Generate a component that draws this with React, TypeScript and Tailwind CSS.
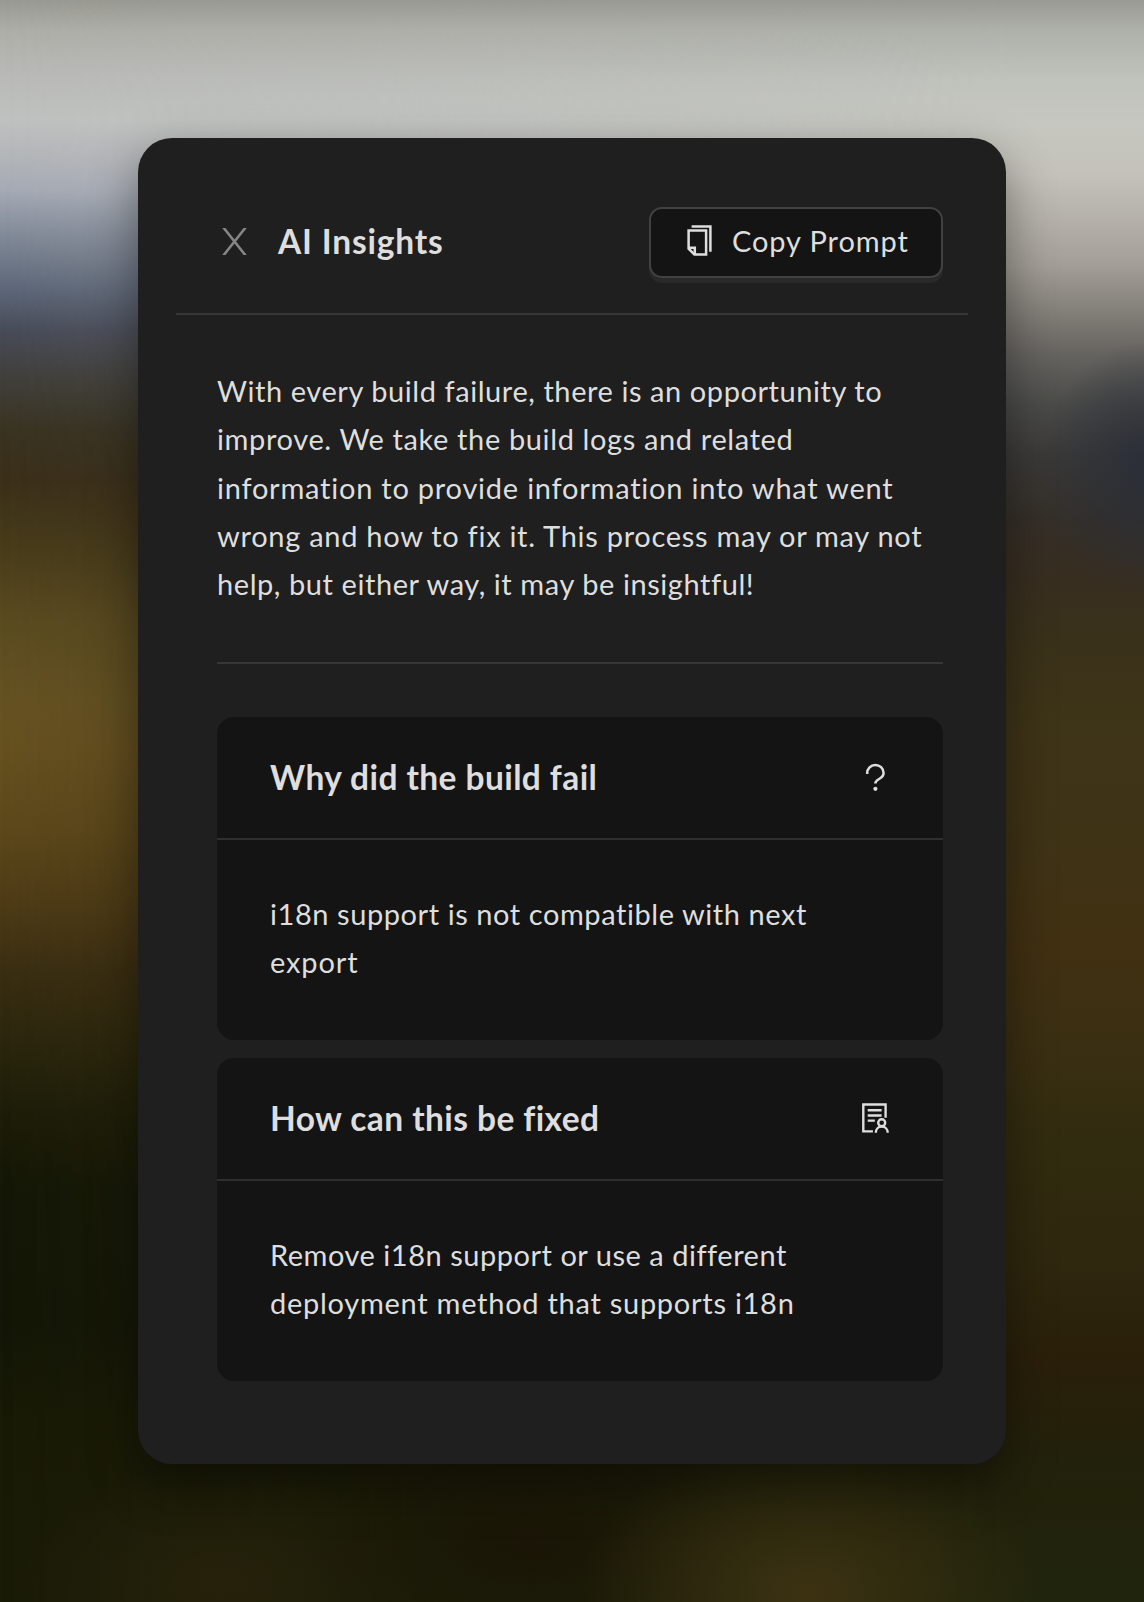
import type { ReactNode } from "react";

const leftBackdrop =
  "bg-[linear-gradient(to_bottom,#999993_0px,#aeaea8_30px,#b9bab7_75px,#bfc1c0_120px,#b3b6b9_155px,#a5aab5_190px,#818a98_235px,#5c6678_290px,#484c59_330px,#42413f_370px,#393321_430px,#3b2f19_480px,#4a3d1a_555px,#5a4b20_620px,#655222_700px,#665020_750px,#5c481a_830px,#4c3a16_910px,#3a2e12_970px,#29250d_1050px,#1c1c08_1120px,#141706_1190px,#131606_1320px,#181a06_1420px,#1a1b07_1602px)]";
const rightBackdrop =
  "bg-[radial-gradient(ellipse_110px_130px_at_1150px_470px,#2a2e38_0%,transparent_100%),linear-gradient(to_bottom,#999a93_0px,#aeb0aa_30px,#c0c2bc_80px,#c6c7c0_125px,#c3c1ba_175px,#b5b1aa_220px,#a39e97_265px,#84807a_310px,#65635f_355px,#4b4b49_405px,#3b3a38_455px,#352f28_520px,#382e20_580px,#3a311a_640px,#3e3417_730px,#3f3316_830px,#413012_950px,#3b2f12_1040px,#312b0f_1150px,#2f270e_1260px,#291f0a_1370px,#23210b_1450px,#20240c_1602px)]";

function CloseIcon() {
  return (
    <svg width="25" height="27" viewBox="0 0 25 27" fill="none" stroke="#858585" strokeWidth="2.6">
      <path d="M1.4 -0.5 L23.6 27.5 M23.6 -0.5 L1.4 27.5" />
    </svg>
  );
}

function CopyIcon() {
  return (
    <svg width="26" height="32" viewBox="0 0 26 32" fill="none" stroke="#dedede" strokeWidth="2.5">
      <path d="M4.6 1.4 H23.4 V26.8" />
      <path d="M1.6 5.6 H19.1 V29.5 H7.4 L1.6 23.7 Z" />
      <path d="M1.6 22.8 H7.8 V29.5" />
    </svg>
  );
}

function QuestionIcon() {
  return (
    <svg className="mb-[2px]" width="27" height="30" viewBox="0 0 27 30" fill="none" stroke="#dedede" strokeWidth="2.5">
      <path d="M5.2 12 V11.2 A8.2 8.2 0 1 1 21.6 11 C21.6 17.6 13.3 16.4 13.3 21.6" />
      <circle cx="13.4" cy="26.8" r="2.1" fill="#dedede" stroke="none" />
    </svg>
  );
}

function ReportIcon() {
  return (
    <svg className="mb-[2px]" width="27" height="30" viewBox="0 0 27 30" fill="none" stroke="#dedede" strokeWidth="2.4">
      <path d="M10.9 28.4 H1.3 V1.5 H23.6 V14.8" />
      <path d="M5.7 7.2 H19.6 M5.7 12.5 H19.6 M5.7 17.6 H12.8" />
      <circle cx="19.7" cy="19.7" r="3.5" />
      <path d="M13.8 29.8 C13.8 26 16.4 23.5 19.7 23.5 C23 23.5 25.7 26 25.7 29.8" />
    </svg>
  );
}

function InsightCard({ title, icon, children }: { title: ReactNode; icon: ReactNode; children: ReactNode }) {
  return (
    <section className="h-[323px] rounded-[17px] bg-[#141414]">
      <header className="flex h-[123px] items-center justify-between border-b-2 border-[#2f2f2f] pr-[54px] pl-[53px]">
        <h2 className="text-[33.5px] leading-none font-bold whitespace-nowrap">{title}</h2>
        {icon}
      </header>
      <p className="px-[53px] pt-[50px] text-[29px] leading-[48.3px] whitespace-nowrap">{children}</p>
    </section>
  );
}

export default function App() {
  return (
    <div className="relative h-[1602px] w-[1144px] overflow-hidden font-['Lato',sans-serif] text-[#dedede]">
      <div className={`absolute inset-0 ${leftBackdrop}`} />
      <div
        className={`absolute inset-0 [mask-image:linear-gradient(to_right,transparent_0px,black_1010px)] ${rightBackdrop}`}
      />
      <div className="absolute inset-x-0 bottom-0 h-[260px] bg-[radial-gradient(ellipse_230px_150px_at_810px_250px,#3c3212_0%,transparent_100%),radial-gradient(ellipse_240px_140px_at_530px_200px,#1a1506_0%,transparent_100%),radial-gradient(ellipse_200px_120px_at_220px_240px,#26210b_0%,transparent_100%)]" />

      <main className="relative mx-[138px] mt-[138px] h-[1326px] rounded-[34px] bg-[#1f1f1f] px-[38px] shadow-[0_20px_50px_rgba(0,0,0,0.42)]">
        <header className="flex h-[177px] items-start border-b-2 border-[#373737] pt-[69px] pr-[25px] pl-[46px]">
          <div className="flex h-[69px] items-center gap-[31px]">
            <CloseIcon />
            <h1 className="text-[33.5px] leading-none font-bold tracking-[0.8px] whitespace-nowrap">AI Insights</h1>
          </div>
          <button className="ml-auto flex h-[71px] w-[294px] items-center rounded-[13px] border-2 border-[#414141] bg-[#141414] pb-[4px] pl-[36px] shadow-[0_5px_0_#292929]">
            <CopyIcon />
            <span className="ml-[19px] pb-[1px] text-[29px] leading-none tracking-[0.9px] whitespace-nowrap">
              Copy Prompt
            </span>
          </button>
        </header>

        <div className="pr-[25px] pl-[41px]">
          <p className="h-[347px] pt-[52px] text-[29px] leading-[48.3px] whitespace-nowrap">
            <span className="block tracking-[0.57px]">With every build failure, there is an opportunity to</span>
            <span className="block tracking-[0.63px]">improve. We take the build logs and related</span>
            <span className="block tracking-[0.77px]">information to provide information into what went</span>
            <span className="block tracking-[0.72px]">wrong and how to fix it. This process may or may not</span>
            <span className="block tracking-[0.57px]">help, but either way, it may be insightful!</span>
          </p>
          <hr className="border-t-2 border-[#373737]" />
          <div className="mt-[53px] flex flex-col gap-[18px]">
            <InsightCard
              title={<span className="tracking-[0.42px]">Why did the build fail</span>}
              icon={<QuestionIcon />}
            >
              <span className="block tracking-[0.57px]">i18n support is not compatible with next</span>
              <span className="block tracking-[0.9px]">export</span>
            </InsightCard>
            <InsightCard
              title={<span className="tracking-[0.42px]">How can this be fixed</span>}
              icon={<ReportIcon />}
            >
              <span className="block tracking-[0.52px]">Remove i18n support or use a different</span>
              <span className="block tracking-[0.73px]">deployment method that supports i18n</span>
            </InsightCard>
          </div>
        </div>
      </main>
    </div>
  );
}
